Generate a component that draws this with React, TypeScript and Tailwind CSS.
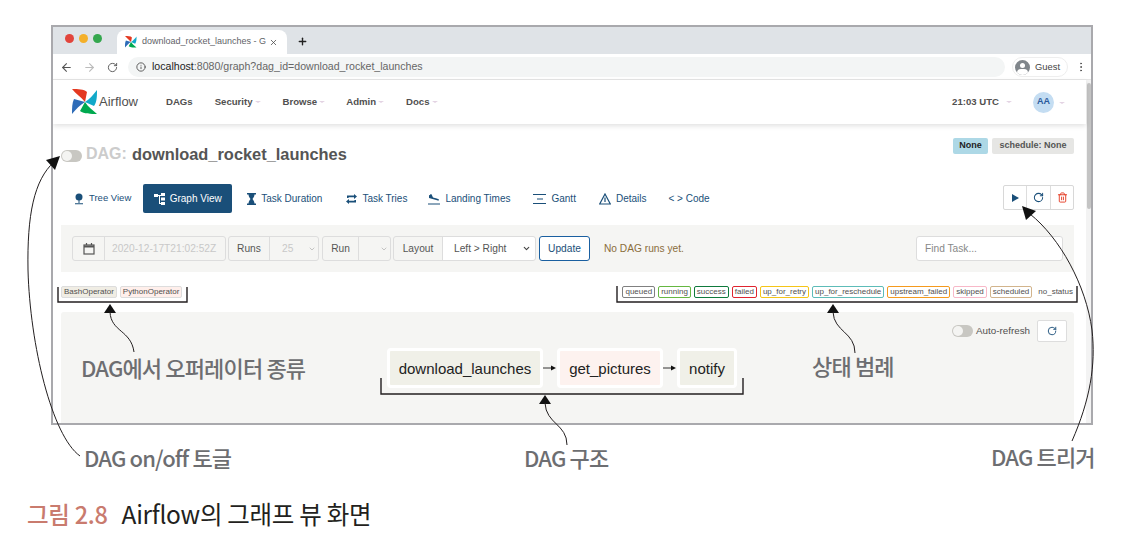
import { ArrowLeft, ArrowRight, ChevronDown, Info, MoreVertical, Plus, RotateCw, Trash2, X } from 'lucide-react';
import type { ReactNode } from 'react';

const BLUE = '#1a4f79';

function Pinwheel({ size }: { size: number }) {
  return (
    <svg width={size} height={size} viewBox="0 0 26 26" className="shrink-0">
      <path d="M0 0 C 6 0, 12 0, 15 3 L13 13 C 9 8, 4 5, 0 0 Z" fill="#e43921" />
      <path d="M25 1 C 25 7, 25 13, 22 17 L13 13 C 18 10, 21 6, 25 1 Z" fill="#11a9c9" />
      <path d="M25 25 C 19 25, 12 25, 8 22 L13 13 C 16 18, 21 21, 25 25 Z" fill="#00a94f" />
      <path d="M0 25 C 0 19, 0 14, 2 10 L13 13 C 8 16, 4 20, 0 25 Z" fill="#2e6cb8" />
    </svg>
  );
}

function Caret() {
  return <span className="ml-[2px] inline-block h-0 w-0 border-x-[3px] border-t-[2px] border-x-transparent border-t-[#e3d3e3] align-middle" />;
}

function NavItem({ label, caret = true, className }: { label: string; caret?: boolean; className: string }) {
  return (
    <span className={`text-[9.6px] font-bold text-[#51504f] ${className}`}>
      {label}
      {caret && <Caret />}
    </span>
  );
}

function Tab({ icon, label, active, className }: { icon: ReactNode; label: string; active?: boolean; className: string }) {
  return (
    <div
      className={`flex h-[29px] items-center gap-[5px] rounded-[2px] ${active ? 'bg-[#1a4f79] text-white' : 'text-[#1a4f79]'} ${className}`}
    >
      {icon}
      {label}
    </div>
  );
}

function Glyph({ children, w = 12 }: { children: ReactNode; w?: number }) {
  return (
    <svg width={w} height="12" viewBox={`0 0 ${w} 12`} fill="currentColor" className="shrink-0">
      {children}
    </svg>
  );
}

function Legend({ label, border }: { label: string; border: string }) {
  return (
    <span className={`flex h-[12px] items-center rounded-[2px] border-[1.5px] bg-white px-[2px] text-[8px] text-[#51504f] ${border}`}>
      {label}
    </span>
  );
}

function Node({ label, bg, className }: { label: string; bg: string; className: string }) {
  return (
    <div className={`flex h-[40px] items-center justify-center rounded-[4px] border-[3px] border-white pt-[2px] text-[15px] text-[#222] ${bg} ${className}`}>
      {label}
    </div>
  );
}

function EdgeArrow() {
  return (
    <svg width="14" height="8" viewBox="0 0 14 8" className="shrink-0">
      <path d="M0 4 H9" stroke="#333" strokeWidth="1" />
      <path d="M8 1.5 L13 4 L8 6.5 Z" fill="#111" />
    </svg>
  );
}

function Toggle({ className }: { className: string }) {
  return (
    <span className={`flex h-[12px] w-[21px] items-center rounded-full bg-[#c8c7c2] pl-[1px] ${className}`}>
      <span className="h-[10px] w-[10px] rounded-full bg-[#f4f4f2]" />
    </span>
  );
}

function Annotation({ text, className }: { text: string; className: string }) {
  return (
    <span className={`absolute whitespace-nowrap text-[22px] font-medium leading-none tracking-[-0.85px] text-[#6d6e71] ${className}`}>
      {text}
    </span>
  );
}

function Overlay() {
  return (
    <svg width="1138" height="546" className="pointer-events-none absolute left-0 top-0" fill="none" stroke="#231f20">
      <path d="M80 456 C 52 436, 30 345, 28 270 C 27 215, 34 180, 54 162" strokeWidth="1" />
      <path d="M60 156 L46 160 L55 170 Z" fill="#111" stroke="none" />
      <path d="M58 287 V302 H187 V287" strokeWidth="1.4" />
      <path d="M110 304 L104 313 L116 313 Z" fill="#111" stroke="none" />
      <path d="M110 312 C 111 332, 131 330, 134 352" strokeWidth="1" />
      <path d="M617 286 V302 H1077 V286" strokeWidth="1.4" />
      <path d="M833 304 L827 313 L839 313 Z" fill="#111" stroke="none" />
      <path d="M833 312 C 834 332, 855 332, 855 353" strokeWidth="1" />
      <path d="M381 378 V394 H743 V378" strokeWidth="1.4" />
      <path d="M545 395 L539 404 L551 404 Z" fill="#111" stroke="none" />
      <path d="M545 403 C 546 424, 567 424, 567 445" strokeWidth="1" />
      <path d="M1072 441 C 1090 400, 1096 365, 1092 330 C 1086 285, 1060 238, 1030 214" strokeWidth="1" />
      <path d="M1022 206 L1026 220 L1036 211 Z" fill="#111" stroke="none" />
    </svg>
  );
}

export default function App() {
  return (
    <div className="relative h-[546px] w-[1138px] overflow-hidden bg-white pt-[25px] pl-[51px] font-['Liberation_Sans',sans-serif]">
      <div className="flex h-[400px] w-[1042px] flex-col overflow-hidden border-2 border-[#a9a9ad]">
        {/* tab strip */}
        <div className="flex h-[27px] shrink-0 bg-[#dfe3e7]">
          <div className="ml-[12px] mt-[7px] flex gap-[5px]">
            <span className="h-[9px] w-[9px] rounded-full bg-[#e2453c]" />
            <span className="h-[9px] w-[9px] rounded-full bg-[#f4b02a]" />
            <span className="h-[9px] w-[9px] rounded-full bg-[#34a74e]" />
          </div>
          <div className="ml-[15px] mt-[3px] flex h-[24px] w-[170px] items-center rounded-t-[8px] bg-white pl-[8px]">
            <Pinwheel size={12} />
            <span className="ml-[5px] w-[127px] whitespace-nowrap text-[9px] text-[#5f6368]">download_rocket_launches - G</span>
            <X size={9} className="text-[#444]" />
          </div>
          <Plus size={11} strokeWidth={3} className="ml-[10px] mt-[9px] text-[#222]" />
        </div>
        {/* address bar */}
        <div className="flex h-[26px] shrink-0 items-center border-b border-[#e6e6e6] bg-white pl-[7px] pt-[1px]">
          <ArrowLeft size={13} className="text-[#555]" />
          <ArrowRight size={13} className="ml-[10px] text-[#bbb]" />
          <RotateCw size={11} className="ml-[11px] text-[#555]" />
          <div className="ml-[10px] flex h-[20px] w-[877px] items-center rounded-full bg-[#f3f5f5] pl-[8px] text-[10.6px]">
            <Info size={10} className="text-[#444]" />
            <span className="ml-[6px] text-[#222]">localhost</span>
            <span className="text-[#666]">:8080/graph?dag_id=download_rocket_launches</span>
          </div>
          <div className="ml-[7px] flex h-[20px] w-[56px] items-center rounded-full border border-[#eee] pl-[2px] text-[9.4px] text-[#444]">
            <span className="relative h-[15px] w-[15px] overflow-hidden rounded-full bg-[#80868b]">
              <span className="absolute left-[5px] top-[3px] h-[5px] w-[5px] rounded-full bg-white" />
              <span className="absolute left-[2px] top-[9px] h-[8px] w-[11px] rounded-full bg-white" />
            </span>
            <span className="ml-[5px]">Guest</span>
          </div>
          <MoreVertical size={12} className="ml-[7px] text-[#555]" />
        </div>
        <div className="flex min-h-0 flex-1">
          <div className="flex min-w-0 flex-1 flex-col">
            {/* airflow nav */}
            <div className="relative flex h-[44px] shrink-0 items-center bg-white shadow-[0_2px_5px_rgba(0,0,0,0.12)]">
              <div className="ml-[19px] flex items-center">
                <Pinwheel size={26} />
                <span className="ml-[1px] text-[13px] text-[#51504f]">Airflow</span>
              </div>
              <NavItem label="DAGs" caret={false} className="ml-[28px]" />
              <NavItem label="Security" className="ml-[22px]" />
              <NavItem label="Browse" className="ml-[22px]" />
              <NavItem label="Admin" className="ml-[21px]" />
              <NavItem label="Docs" className="ml-[22px]" />
              <span className="ml-auto text-[9.6px] font-bold text-[#51504f]">21:03 UTC<span className="ml-[5px]"><Caret /></span></span>
              <span className="ml-[21px] flex h-[21px] w-[21px] items-center justify-center rounded-full bg-[#c4ddf2] text-[9px] font-bold text-[#2a5a9c]">AA</span>
              <span className="ml-[3px] mr-[21px]"><Caret /></span>
            </div>
            {/* page */}
            <div className="flex min-h-0 flex-1 flex-col pl-[8px] pr-[12px]">
              <div className="flex h-[60px] shrink-0">
                <div className="mt-[18px] flex h-[24px] items-center">
                  <Toggle className="mt-[4px]" />
                  <span className="ml-[4px] text-[16px] font-bold text-[#ccc]">DAG:</span>
                  <span className="ml-[5px] text-[16.4px] font-bold text-[#555]">download_rocket_launches</span>
                </div>
                <div className="ml-auto mt-[14px] flex h-[16px] gap-[4px] text-[9px] font-bold">
                  <span className="flex w-[35px] items-center justify-center rounded-[2px] bg-[#add8e6] text-[#222]">None</span>
                  <span className="flex w-[82px] items-center justify-center rounded-[2px] bg-[#e6e6e4] text-[#555]">schedule: None</span>
                </div>
              </div>
              {/* tabs */}
              <div className="flex h-[29px] shrink-0 items-center text-[10px]">
                <Tab
                  className="ml-[13px] text-[9.5px]"
                  label="Tree View"
                  icon={<Glyph w={10}><circle cx="5" cy="4" r="3.5" /><path d="M4.500 7h1v3h-1zM1 10.300h8v1H1z" /></Glyph>}
                />
                <Tab
                  active
                  className="ml-[12px] w-[89px] justify-center"
                  label="Graph View"
                  icon={<Glyph w={11}><path d="M0 1h4v3H0zM7 0h4v3H7zM7 4.500h4v3H7zM7 9h4v3H7zM4 2h3v1H4zM5 2h1v8H5zM5 10h2v1H5z" /></Glyph>}
                />
                <Tab
                  className="ml-[15px]"
                  label="Task Duration"
                  icon={<Glyph w={9}><path d="M0 0h9v1.500H7.500C7.500 4 6 5 5.500 6c.5 1 2 2 2 4.500H9V12H0v-1.500h1.500C1.500 8 3 7 3.500 6 3 5 1.500 4 1.500 1.500H0z" /></Glyph>}
                />
                <Tab
                  className="ml-[24px]"
                  label="Task Tries"
                  icon={<Glyph w={11}><path d="M1 5V2.500h7V1l3 2.500L8 6V4.300H2.600V5zM10 7v2.500H3V11L0 8.500 3 6v1.700h5.400V7z" /></Glyph>}
                />
                <Tab
                  className="ml-[21px]"
                  label="Landing Times"
                  icon={<Glyph><path d="M0 10.500h12v1H0zM2.500 1l1 .3L5 4.500l3 .8c2 .6 3 1 3 1.700 0 .6-1 .6-2 .3L1 5V2l1 .300z" /></Glyph>}
                />
                <Tab
                  className="ml-[23px]"
                  label="Gantt"
                  icon={<Glyph w={13}><path d="M0 1h13v1H0zM4 5.500h6v1H4zM0 10h13v1H0z" /></Glyph>}
                />
                <Tab
                  className="ml-[23px]"
                  label="Details"
                  icon={<svg width="12" height="12" viewBox="0 0 12 12" fill="none" stroke="currentColor" strokeWidth="1.200" className="shrink-0"><path d="M6 1 L11.300 11 H.7 Z M6 4.500 V9" /></svg>}
                />
                <Tab className="ml-[22px]" label="< > Code" icon={null} />
                <div className="ml-auto flex h-[25px] -translate-y-[1px] items-center rounded-[2px] border border-[#d8d8d8] bg-white text-[#1a4f79]">
                  <span className="flex h-full w-[23px] items-center justify-center border-r border-[#ddd]">
                    <svg width="7" height="8" viewBox="0 0 7 8"><path d="M0 0 L7 4 L0 8 Z" fill={BLUE} /></svg>
                  </span>
                  <span className="flex h-full w-[24px] items-center justify-center border-r border-[#ddd]"><RotateCw size={11} strokeWidth={2.2} /></span>
                  <span className="flex h-full w-[22px] items-center justify-center text-[#e43921]"><Trash2 size={11} /></span>
                </div>
              </div>
              {/* toolbar */}
              <div className="mt-[12px] flex h-[47px] shrink-0 items-center bg-[#f5f5f3] pl-[11px] pr-[11px] text-[10.2px]">
                <div className="flex h-[25px] w-[154px] items-center rounded-[3px] border border-[#ddd] text-[#c8c8c8]">
                  <span className="flex h-full w-[32px] items-center justify-center border-r border-[#ddd] text-[#555]">
                    <svg width="12" height="12" viewBox="0 0 12 12" fill="none" stroke="currentColor" strokeWidth="1.200"><rect x="1" y="2" width="10" height="9" /><path d="M1 3.500h10" strokeWidth="2" /><path d="M3.500 0v2M8.500 0v2" /></svg>
                  </span>
                  <span className="ml-[7px]">2020-12-17T21:02:52Z</span>
                </div>
                <div className="ml-[2px] flex h-[25px] w-[91px] items-center rounded-[3px] border border-[#ddd] text-[#555]">
                  <span className="flex h-full w-[41px] items-center justify-center border-r border-[#ddd]">Runs</span>
                  <span className="ml-[12px] text-[#c8c8c8]">25</span>
                  <ChevronDown size={8} className="ml-[15px] text-[#aaa]" />
                </div>
                <div className="ml-[3px] flex h-[25px] w-[69px] items-center rounded-[3px] border border-[#ddd] text-[#555]">
                  <span className="flex h-full w-[36px] items-center justify-center border-r border-[#ddd]">Run</span>
                  <ChevronDown size={8} className="ml-[21px] text-[#aaa]" />
                </div>
                <div className="ml-[2px] flex h-[25px] w-[143px] items-center rounded-[3px] border border-[#ddd] text-[#555]">
                  <span className="flex h-full w-[49px] items-center justify-center border-r border-[#ddd]">Layout</span>
                  <span className="flex h-full flex-1 items-center rounded-r-[3px] bg-white pl-[11px]">Left &gt; Right<ChevronDown size={9} strokeWidth={3} className="ml-[16px] text-[#444]" /></span>
                </div>
                <span className="ml-[3px] flex h-[25px] w-[51px] items-center justify-center rounded-[3px] border border-[#1a5fa0] bg-white text-[#1a4f79]">Update</span>
                <span className="ml-[14px] text-[#8a6d3b]">No DAG runs yet.</span>
                <span className="ml-auto flex h-[25px] w-[147px] items-center rounded-[3px] border border-[#ddd] bg-white pl-[8px] text-[#888]">Find Task...</span>
              </div>
              {/* legend */}
              <div className="flex h-[40px] shrink-0 items-center pb-[1px]">
                <div className="flex gap-[3px]">
                  <Legend label="BashOperator" border="border-[#ddd] !bg-[#f0ede4]" />
                  <Legend label="PythonOperator" border="border-[#ddd] !bg-[#ffefeb]" />
                </div>
                <div className="ml-auto -mr-[2px] flex gap-[3px]">
                  <Legend label="queued" border="border-[#808080]" />
                  <Legend label="running" border="border-[#65b741]" />
                  <Legend label="success" border="border-[#0f7a3c]" />
                  <Legend label="failed" border="border-[#e0242f]" />
                  <Legend label="up_for_retry" border="border-[#f5c518]" />
                  <Legend label="up_for_reschedule" border="border-[#5dbcb8]" />
                  <Legend label="upstream_failed" border="border-[#f59a1e]" />
                  <Legend label="skipped" border="border-[#f8b8c8]" />
                  <Legend label="scheduled" border="border-[#d2b48c]" />
                  <Legend label="no_status" border="border-transparent" />
                </div>
              </div>
              {/* graph */}
              <div className="min-h-0 flex-1 rounded-t-[3px] bg-[#f5f5f3]">
                <div className="flex items-center justify-end pr-[7px] pt-[8px] text-[9.8px] text-[#51504f]">
                  <Toggle className="" />
                  <span className="ml-[3px]">Auto-refresh</span>
                  <span className="ml-[7px] flex h-[22px] w-[30px] items-center justify-center rounded-[2px] border border-[#ddd] bg-white text-[#1a4f79]"><RotateCw size={10} strokeWidth={2.2} /></span>
                </div>
                <div className="ml-[326px] mt-[6px] flex items-center">
                  <Node label="download_launches" bg="bg-[#f0f0e8]" className="w-[156px]" />
                  <EdgeArrow />
                  <Node label="get_pictures" bg="bg-[#fdf2ef]" className="w-[106px]" />
                  <EdgeArrow />
                  <Node label="notify" bg="bg-[#f0f0e8]" className="w-[60px]" />
                </div>
              </div>
            </div>
          </div>
          {/* scrollbar */}
          <div className="flex w-[5px] shrink-0 justify-end bg-[#f3f3f3]">
            <div className="mt-[3px] h-[126px] w-[4px] rounded-full bg-[#c4c4c4]" />
          </div>
        </div>
      </div>

      <p className="mt-[74px] -ml-[24px] whitespace-nowrap leading-[30px] text-[#231f20] font-['Noto_Sans_CJK_KR',sans-serif]">
        <span className="text-[23.5px] font-medium tracking-[-0.3px] text-[#c97b6e]">그림 2.8</span>
        <span className="ml-[14px] text-[24.5px] tracking-[-0.3px]">Airflow의 그래프 뷰 화면</span>
      </p>

      <Overlay />
      <div className="font-['Noto_Sans_CJK_KR',sans-serif]">
        <Annotation text="DAG에서 오퍼레이터 종류" className="left-[81px] top-[356px]" />
        <Annotation text="상태 범례" className="left-[812px] top-[354px]" />
        <Annotation text="DAG on/off 토글" className="left-[84px] top-[446px]" />
        <Annotation text="DAG 구조" className="left-[524px] top-[446px]" />
        <Annotation text="DAG 트리거" className="left-[991px] top-[445px]" />
      </div>
    </div>
  );
}
